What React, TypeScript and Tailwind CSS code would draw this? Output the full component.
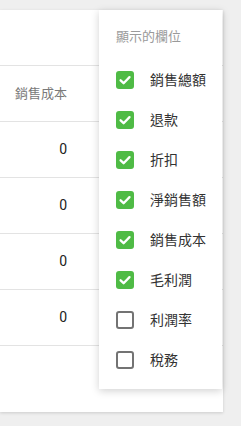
import React from "react";

const items: { label: string; checked: boolean }[] = [
  { label: "銷售總額", checked: true },
  { label: "退款", checked: true },
  { label: "折扣", checked: true },
  { label: "淨銷售額", checked: true },
  { label: "銷售成本", checked: true },
  { label: "毛利潤", checked: true },
  { label: "利潤率", checked: false },
  { label: "稅務", checked: false },
];

function Box({ checked }: { checked: boolean }) {
  if (checked) {
    return (
      <div className="w-[18px] h-[18px] rounded-[3px] bg-[#4fbb45] flex items-center justify-center shrink-0">
        <svg width="14" height="14" viewBox="0 0 14 14">
          <path d="M2.6 7.3 L5.6 10.2 L11.5 4.1" fill="none" stroke="#fff" strokeWidth="2.3" strokeLinecap="round" strokeLinejoin="round" />
        </svg>
      </div>
    );
  }
  return <div className="w-[18px] h-[18px] rounded-[3px] border-2 border-[#737373] bg-white shrink-0" />;
}

export default function App() {
  const rows = [0, 1, 2, 3];
  return (
    <div
      className="w-[241px] h-[426px] bg-[#efefef] pt-[10px] overflow-hidden"
      style={{ fontFamily: "Roboto, 'Noto Sans CJK TC', sans-serif" }}
    >
      <div className="relative w-[223px] h-[402px] bg-white shadow-[0_1px_3px_rgba(0,0,0,0.15)]">
        <div className="h-[56px] border-b border-[#e3e3e3]" />
        <div className="h-[56px] border-b border-[#e3e3e3] flex items-center">
          <div className="w-[83px] pr-4 text-right text-[13px] text-[#7a7a7a]">銷售成本</div>
        </div>
        {rows.map((r) => (
          <div key={r} className="h-[56px] border-b border-[#e3e3e3] flex items-center">
            <div className="w-[83px] pr-4 text-right text-[14px] text-[#222]">0</div>
          </div>
        ))}
        <div className="absolute left-[99px] top-0 w-[123px] h-[379px] bg-white shadow-[0_2px_8px_rgba(0,0,0,0.18)] pt-[18px] pl-[17px]">
          <div className="h-[18px] leading-[18px] text-[13px] text-[#9a9a9a]">顯示的欄位</div>
          <div className="mt-[14px] flex flex-col">
            {items.map((it) => (
              <div key={it.label} className="h-10 flex items-center gap-[16px]">
                <Box checked={it.checked} />
                <span className="text-[14px] text-[#333]">{it.label}</span>
              </div>
            ))}
          </div>
        </div>
      </div>
    </div>
  );
}
